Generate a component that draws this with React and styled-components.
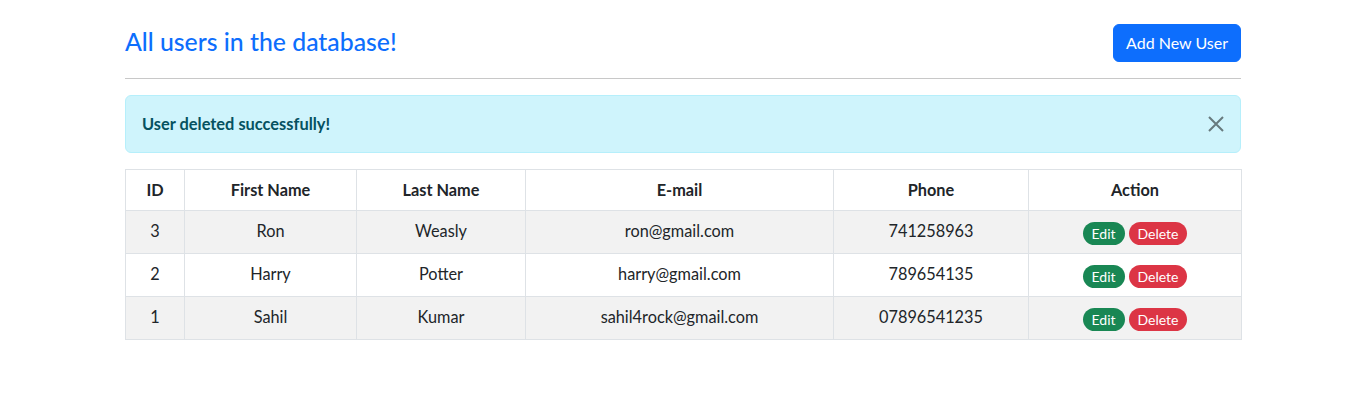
import React from "react";
import styled, { createGlobalStyle } from "styled-components";

const Global = createGlobalStyle`
  * { box-sizing: border-box; }
  body {
    margin: 0;
    background: #fff;
    color: #212529;
    font-family: Lato, "Open Sans", sans-serif;
    font-size: 16.3px;
    line-height: 1.5;
  }
`;

const Container = styled.div`
  width: 1140px;
  margin: 24px auto 0;
  padding: 0 12px;
`;

const Header = styled.div`
  display: flex;
  justify-content: space-between;
  align-items: center;
`;

const Title = styled.h4`
  margin: 0 0 2px;
  font-size: 24.8px;
  font-weight: 500;
  line-height: 1.2;
  color: #0d6efd;
`;

const PrimaryButton = styled.button`
  font-family: inherit;
  font-size: 16px;
  line-height: 24px;
  padding: 6px 12px;
  border: 1px solid #0d6efd;
  border-radius: 6px;
  background: #0d6efd;
  color: #fff;
  cursor: pointer;
`;

const Rule = styled.hr`
  margin: 16px 0;
  border: 0;
  border-top: 1px solid #c8c8c8;
`;

const Alert = styled.div`
  position: relative;
  padding: 16px 48px 16px 16px;
  margin-bottom: 16px;
  border: 1px solid #b6effb;
  border-radius: 6px;
  background: #cff4fc;
  color: #055160;
  font-size: 16.4px;
  font-weight: 700;
  line-height: 24px;
`;

const CloseButton = styled.button`
  position: absolute;
  top: 0;
  right: 0;
  width: 48px;
  height: 56px;
  padding: 0;
  border: 0;
  background: transparent;
  display: flex;
  align-items: center;
  justify-content: center;
  cursor: pointer;
`;

const Table = styled.table`
  width: 100%;
  border-collapse: collapse;
  table-layout: fixed;
  text-align: center;
`;

const HeadCell = styled.th`
  width: ${(p) => p.$w}px;
  height: 41px;
  padding: 0 8px;
  border: 1px solid #dee2e6;
  font-weight: 700;
  vertical-align: middle;
`;

const Row = styled.tr`
  background: ${(p) => (p.$striped ? "#f2f2f2" : "#fff")};
`;

const Cell = styled.td`
  height: 43px;
  padding: 0 8px 1px;
  border: 1px solid #dee2e6;
  vertical-align: middle;
`;

const Actions = styled.div`
  display: flex;
  justify-content: center;
  gap: 4px;
  padding-top: 3px;
`;

const PillButton = styled.button`
  height: 23px;
  padding: 0 9px;
  border: 0;
  border-radius: 12px;
  font-family: inherit;
  font-size: 14px;
  line-height: 23px;
  color: #fff;
  background: ${(p) => (p.$variant === "danger" ? "#dc3545" : "#198754")};
  cursor: pointer;
`;

const columns = [
  ["ID", 59],
  ["First Name", 172],
  ["Last Name", 169],
  ["E-mail", 308],
  ["Phone", 195],
  ["Action", 213],
];

const users = [
  { id: 3, first: "Ron", last: "Weasly", email: "ron@gmail.com", phone: "741258963" },
  { id: 2, first: "Harry", last: "Potter", email: "harry@gmail.com", phone: "789654135" },
  { id: 1, first: "Sahil", last: "Kumar", email: "sahil4rock@gmail.com", phone: "07896541235" },
];

export default function App() {
  return (
    <>
      <Global />
      <Container>
        <Header>
          <Title>All users in the database!</Title>
          <PrimaryButton>Add New User</PrimaryButton>
        </Header>
        <Rule />
        <Alert>
          User deleted successfully!
          <CloseButton aria-label="Close">
            <svg width="16" height="16" viewBox="0 0 16 16">
              <path d="M1 1L15 15M15 1L1 15" stroke="#000" strokeOpacity="0.5" strokeWidth="2" />
            </svg>
          </CloseButton>
        </Alert>
        <Table>
          <thead>
            <tr>
              {columns.map(([label, w]) => (
                <HeadCell key={label} $w={w}>{label}</HeadCell>
              ))}
            </tr>
          </thead>
          <tbody>
            {users.map((u, i) => (
              <Row key={u.id} $striped={i % 2 === 0}>
                <Cell>{u.id}</Cell>
                <Cell>{u.first}</Cell>
                <Cell>{u.last}</Cell>
                <Cell>{u.email}</Cell>
                <Cell>{u.phone}</Cell>
                <Cell>
                  <Actions>
                    <PillButton>Edit</PillButton>
                    <PillButton $variant="danger">Delete</PillButton>
                  </Actions>
                </Cell>
              </Row>
            ))}
          </tbody>
        </Table>
      </Container>
    </>
  );
}
